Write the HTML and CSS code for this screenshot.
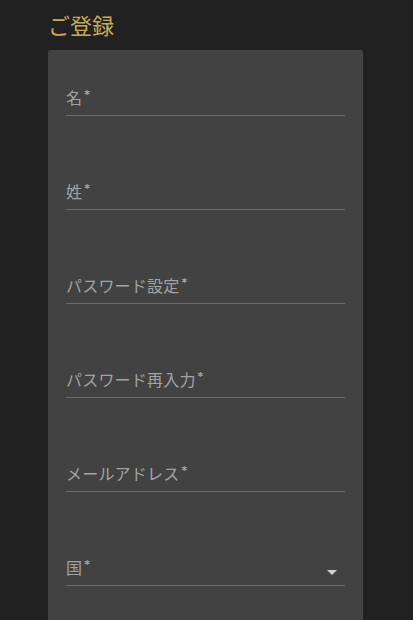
FILE: index.html
```html
<!DOCTYPE html>
<html lang="ja">
<head>
<meta charset="utf-8">
<link rel="stylesheet" href="styles.css">
</head>
<body>
<div class="page">
  <h1 class="title">ご登録</h1>
  <div class="card">
    <div class="field"><span class="label">名<span class="req">*</span></span></div>
    <div class="field"><span class="label">姓<span class="req">*</span></span></div>
    <div class="field"><span class="label">パスワード設定<span class="req">*</span></span></div>
    <div class="field"><span class="label">パスワード再入力<span class="req">*</span></span></div>
    <div class="field"><span class="label">メールアドレス<span class="req">*</span></span></div>
    <div class="field select"><span class="label">国<span class="req">*</span></span><span class="arrow"></span></div>
  </div>
</div>
</body>
</html>
```
FILE: styles.css
```css
html, body {
  margin: 0;
  padding: 0;
  background: #212121;
  height: 100%;
  overflow: hidden;
}
.page {
  padding: 8px 0 0 48px;
  font-family: "Noto Sans CJK JP", "Noto Sans", sans-serif;
}
.title {
  margin: 0;
  font-size: 22px;
  line-height: 33px;
  font-weight: 400;
  color: #c8ab5a;
}
.card {
  margin-top: 9px;
  width: 315px;
  box-sizing: border-box;
  background: #424242;
  border-radius: 2px;
  padding: 30px 18px 60px;
  display: flex;
  flex-direction: column;
  gap: 58px;
}
.field {
  position: relative;
  height: 36px;
  box-sizing: border-box;
  border-bottom: 1px solid #6a6a6a;
  display: flex;
  align-items: flex-end;
  padding-bottom: 2px;
}
.label {
  font-size: 16px;
  line-height: 24px;
  color: #a2a2a2;
  letter-spacing: 0.2px;
}
.req {
  font-family: "DejaVu Sans", sans-serif;
  font-size: 11px;
  font-weight: 700;
  position: relative;
  top: -6px;
  margin-left: 2px;
  color: #a8a8a8;
}
.arrow {
  position: absolute;
  right: 8px;
  bottom: 10px;
  width: 0;
  height: 0;
  border-left: 5px solid transparent;
  border-right: 5px solid transparent;
  border-top: 5px solid #d0d0d0;
}
```
